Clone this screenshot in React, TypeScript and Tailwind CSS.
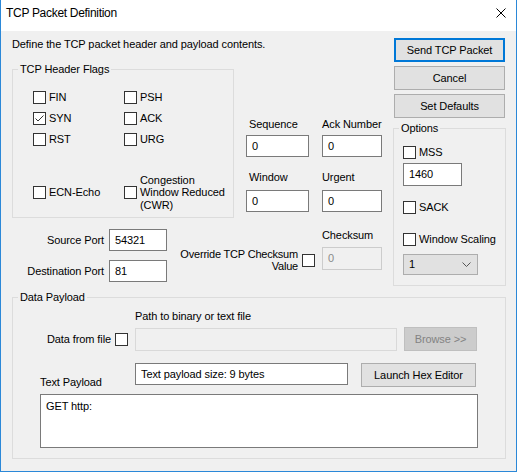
import React from 'react'

function Box({ checked = false }: { checked?: boolean }) {
  return (
    <span className="flex h-[13px] w-[13px] shrink-0 items-center justify-center border border-[#333333] bg-white">
      {checked && (
        <svg width="11" height="11" viewBox="0 0 11 11">
          <path d="M1.5 5.5 L4 8 L9.5 2.5" fill="none" stroke="#333333" strokeWidth="1" />
        </svg>
      )}
    </span>
  )
}

function Check({ label, checked }: { label: string; checked?: boolean }) {
  return (
    <div className="flex h-[13px] items-center gap-[3px]">
      <Box checked={checked} />
      <span className="whitespace-nowrap">{label}</span>
    </div>
  )
}

function TextBox({ value, className = '', disabled = false }: { value: string; className?: string; disabled?: boolean }) {
  return (
    <div
      className={
        'flex items-start px-[5px] pt-[4px] ' +
        (disabled ? 'border border-[#cccccc] bg-[#f0f0f0] text-[#8a8a8a] ' : 'border border-[#7a7a7a] bg-white ') +
        className
      }
    >
      {value}
    </div>
  )
}

function Button({ label, className = '', primary = false, disabled = false }: { label: string; className?: string; primary?: boolean; disabled?: boolean }) {
  return (
    <div
      className={
        'flex items-center justify-center whitespace-nowrap ' +
        (primary
          ? 'border-2 border-[#0078d7] bg-[#e1e1e1] '
          : disabled
            ? 'border border-[#bfbfbf] bg-[#cccccc] text-[#838383] '
            : 'border border-[#adadad] bg-[#e1e1e1] ') +
        className
      }
    >
      {label}
    </div>
  )
}

function Group({ title, className = '', children }: { title: string; className?: string; children: React.ReactNode }) {
  return (
    <fieldset className={'border border-[#dcdcdc] ' + className}>
      <legend className="ml-[5px] px-[2px] leading-[13px]">{title}</legend>
      {children}
    </fieldset>
  )
}

export default function App() {
  return (
    <div className="flex h-[472px] w-[517px] flex-col border-x border-b border-[#2b88d8] font-['Liberation_Sans',Arial,sans-serif] text-[11px] leading-[13px] tracking-[-0.1px] text-black">
      {/* title bar */}
      <div className="flex h-[31px] shrink-0 items-start justify-between bg-white">
        <div className="pl-[5px] pt-[6px] text-[12px] leading-[15px] tracking-[-0.3px]">TCP Packet Definition</div>
        <svg className="mr-[10px] mt-[8px]" width="10" height="10" viewBox="0 0 10 10">
          <path d="M0.5 0.5 L9.5 9.5 M9.5 0.5 L0.5 9.5" stroke="#000" strokeWidth="1" />
        </svg>
      </div>

      {/* client area */}
      <div className="flex flex-1 flex-col bg-[#f0f0f0] pl-[11px] pr-[10px]">
        <div className="flex justify-between">
          {/* left block */}
          <div className="flex w-[370px] flex-col pt-[7px]">
            <div className="h-[13px] whitespace-nowrap">Define the TCP packet header and payload contents.</div>

            <div className="mt-[12px] flex">
              <Group title="TCP Header Flags" className="h-[155px] w-[222px]">
                <div className="mt-[15px] grid grid-cols-[91px_auto] gap-y-[8px] pl-[20px]">
                  <Check label="FIN" />
                  <Check label="PSH" />
                  <Check label="SYN" checked />
                  <Check label="ACK" />
                  <Check label="RST" />
                  <Check label="URG" />
                  <div className="mt-[19px] flex h-[39px] items-center">
                    <Check label="ECN-Echo" />
                  </div>
                  <div className="mt-[19px] flex h-[39px] items-center gap-[3px]">
                    <Box />
                    <span className="leading-[12.5px]">
                      Congestion
                      <br />
                      Window Reduced
                      <br />
                      (CWR)
                    </span>
                  </div>
                </div>
              </Group>

              <div className="ml-[12px] mt-[55px] grid grid-cols-[63px_60px] gap-x-[13px]">
                <div className="flex flex-col">
                  <div className="h-[13px] pl-[3px]">Sequence</div>
                  <TextBox value="0" className="mt-[4px] h-[22px]" />
                  <div className="mt-[14px] h-[13px] pl-[3px]">Window</div>
                  <TextBox value="0" className="mt-[6px] h-[22px]" />
                </div>
                <div className="flex flex-col">
                  <div className="h-[13px] whitespace-nowrap">Ack Number</div>
                  <TextBox value="0" className="mt-[4px] h-[22px]" />
                  <div className="mt-[14px] h-[13px]">Urgent</div>
                  <TextBox value="0" className="mt-[6px] h-[22px]" />
                </div>
              </div>
            </div>

            <div className="flex items-start">
              <div className="mt-[11px] flex w-[155px] flex-col items-end gap-[9px]">
                <div className="flex items-center gap-[5px]">
                  <span>Source Port</span>
                  <TextBox value="54321" className="h-[22px] w-[58px]" />
                </div>
                <div className="flex items-center gap-[5px]">
                  <span>Destination Port</span>
                  <TextBox value="81" className="h-[22px] w-[58px]" />
                </div>
              </div>
              <div className="mt-[30px] flex w-[148px] items-center justify-end gap-[4px]">
                <span className="text-right leading-[12px] tracking-[-0.2px]">
                  Override TCP Checksum
                  <br />
                  Value
                </span>
                <Box />
              </div>
              <div className="ml-[7px] mt-[11px] flex w-[60px] flex-col">
                <div className="h-[13px]">Checksum</div>
                <TextBox value="0" disabled className="mt-[5px] h-[23px]" />
              </div>
            </div>
          </div>

          {/* right column */}
          <div className="flex w-[113px] flex-col pt-[7px]">
            <div className="ml-[1px] flex w-[111px] flex-col gap-[4px]">
              <Button label="Send TCP Packet" primary className="h-[24px]" />
              <Button label="Cancel" className="h-[24px]" />
              <Button label="Set Defaults" className="h-[24px]" />
            </div>
            <Group title="Options" className="mt-[4px] h-[164px]">
              <div className="flex flex-col items-start pl-[9px]">
                <div className="mt-[11px]">
                  <Check label="MSS" />
                </div>
                <TextBox value="1460" className="mt-[4px] h-[23px] w-[59px]" />
                <div className="mt-[15px]">
                  <Check label="SACK" />
                </div>
                <div className="mt-[19px]">
                  <Check label="Window Scaling" />
                </div>
                <div className="mt-[8px] flex h-[21px] w-[75px] items-center justify-between border border-[#adadad] bg-[#e1e1e1] pl-[5px] pr-[6px]">
                  <span>1</span>
                  <svg width="9" height="5" viewBox="0 0 9 5">
                    <path d="M0.5 0.5 L4.5 4.5 L8.5 0.5" fill="none" stroke="#555" strokeWidth="1" />
                  </svg>
                </div>
              </div>
            </Group>
          </div>
        </div>

        {/* data payload */}
        <Group title="Data Payload" className="mt-[5px] w-[494px] pb-[10px]">
          <div className="ml-[122px] mt-[6px] h-[13px]">Path to binary or text file</div>
          <div className="mt-[4px] flex items-center">
            <div className="flex w-[115px] items-center justify-end gap-[4px]">
              <span>Data from file</span>
              <Box />
            </div>
            <div className="ml-[7px] h-[23px] w-[262px] border border-[#d9d9d9] bg-[#f0f0f0]" />
            <Button label="Browse >>" disabled className="ml-[7px] h-[24px] w-[73px]" />
          </div>
          <div className="mt-[12px] flex items-start">
            <div className="mt-[13px] w-[122px] pl-[27px]">Text Payload</div>
            <TextBox value="Text payload size: 9 bytes" className="h-[22px] w-[213px]" />
            <Button label="Launch Hex Editor" className="ml-[13px] h-[24px] w-[115px]" />
          </div>
          <div className="ml-[27px] mt-[5px] h-[54px] w-[438px] border border-[#7a7a7a] bg-white px-[5px] pt-[5px]">
            GET http:
          </div>
        </Group>
      </div>
    </div>
  )
}
